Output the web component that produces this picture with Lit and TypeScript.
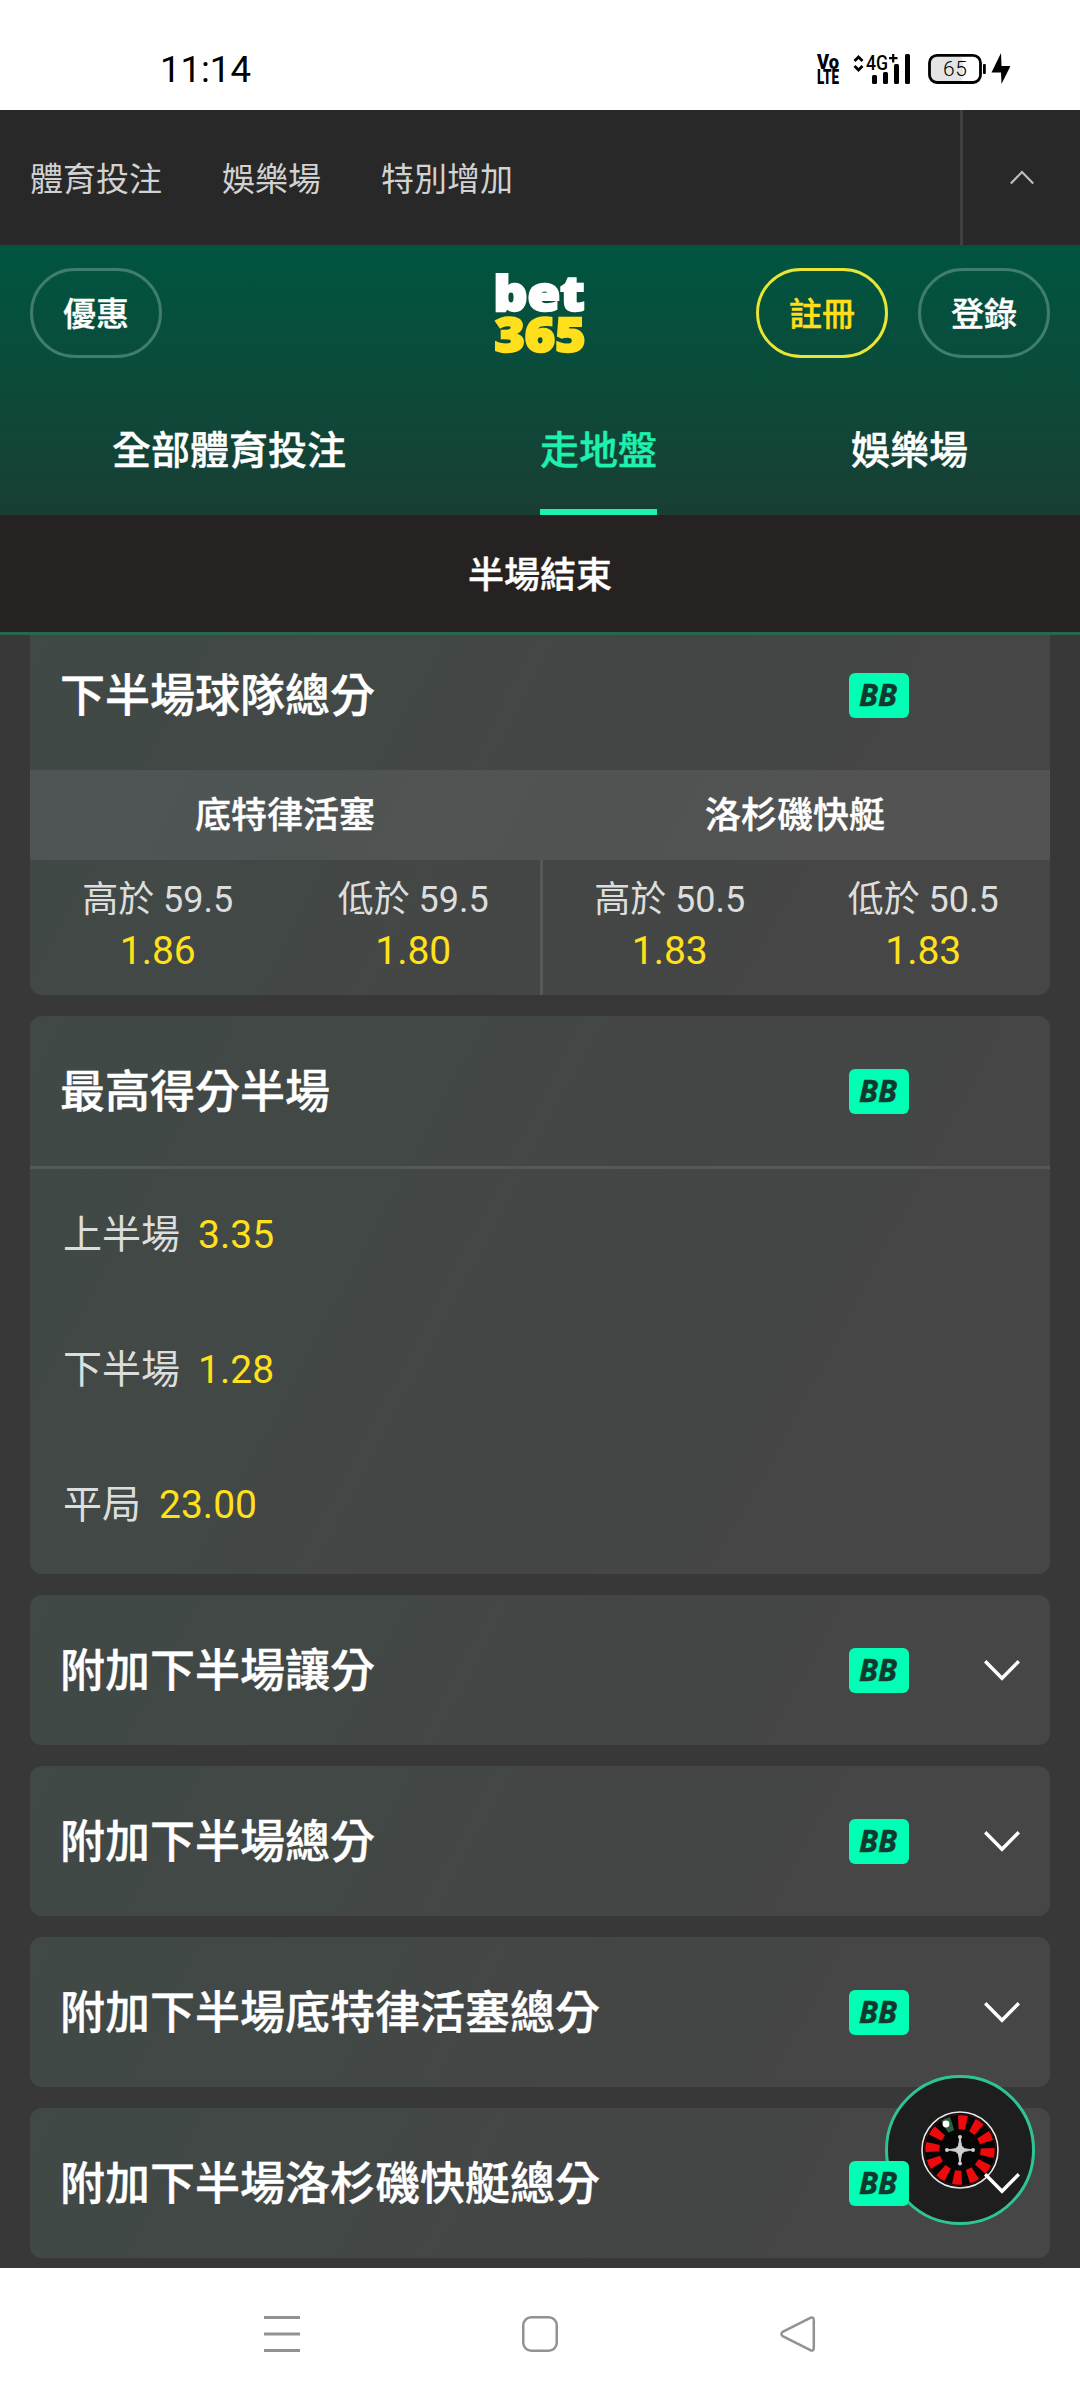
import { LitElement, html, css, svg, nothing } from "lit";
import { customElement, property } from "lit/decorators.js";

const chevronDown = html`<svg width="36" height="21" viewBox="0 0 36 21">
  <path d="M1.2 1.2 18 18.3 34.8 1.2" fill="none" stroke="#fff" stroke-width="3.4" />
</svg>`;

@customElement("status-bar")
class StatusBar extends LitElement {
  static styles = css`
    :host {
      display: flex;
      justify-content: space-between;
      height: 110px;
      box-sizing: border-box;
      padding: 46px 70px 0 160px;
      background: #fff;
      color: #000;
    }
    .clock {
      font-size: 36.5px;
      line-height: 47px;
    }
    .icons {
      margin-top: 4px;
      height: 38px;
    }
  `;
  render() {
    return html`
      <span class="clock">11:14</span>
      <svg class="icons" width="196" height="38" viewBox="814 50 196 38">
        <g font-family="Roboto, sans-serif" font-weight="900">
          <text x="817" y="69.2" font-size="19.5" textLength="22" lengthAdjust="spacingAndGlyphs">Vo</text>
          <text x="817" y="84.2" font-size="19.5" textLength="22" lengthAdjust="spacingAndGlyphs">LTE</text>
        </g>
        <path d="M854.5 61 858.5 57 862.5 61M854.5 66 858.5 70 862.5 66" fill="none" stroke="#000" stroke-width="2.8" />
        <text x="866" y="69.5" font-size="20.5" font-weight="500" textLength="22" lengthAdjust="spacingAndGlyphs" font-family="Roboto, sans-serif">4G</text>
        <path d="M889 58.2H897.5M893.2 54V62.4" stroke="#000" stroke-width="2.2" />
        <rect x="872" y="75" width="5" height="9" rx="1.5" />
        <rect x="883" y="72" width="5" height="12" rx="1.5" />
        <rect x="894" y="64" width="5" height="20" rx="1.5" />
        <rect x="905" y="54" width="5" height="30" rx="1.5" />
        <rect x="930" y="56" width="33" height="26" rx="6" fill="#e4e4e4" />
        <rect x="929.5" y="55.3" width="51" height="27.2" rx="7.5" fill="none" stroke="#000" stroke-width="2.8" />
        <rect x="983" y="64" width="2.8" height="10" rx="1" />
        <text x="943" y="76" font-size="21" font-weight="300" textLength="24" font-family="Roboto, sans-serif">65</text>
        <path d="M1001 53 991.5 72.5H1001L1001.5 84 1010.5 66H1001.5Z" />
      </svg>
    `;
  }
}

@customElement("site-header")
class SiteHeader extends LitElement {
  static styles = css`
    :host {
      display: block;
      color: #fff;
    }
    .products {
      display: flex;
      height: 135px;
      background: #282828;
      color: #d2d2d2;
    }
    .links {
      display: flex;
      flex: 1;
      gap: 60px;
      align-items: center;
      padding: 5px 0 0 30px;
      font-size: 33px;
      line-height: 48px;
    }
    .collapse {
      display: flex;
      width: 117px;
      box-sizing: content-box;
      border-left: 3px solid #404040;
      align-items: center;
      justify-content: center;
    }
    .brand {
      height: 270px;
      display: flex;
      flex-direction: column;
      background: linear-gradient(#005540, #0b4b3a 50%, #193e34);
    }
    .actions {
      display: grid;
      grid-template-columns: 1fr auto 1fr;
      align-items: center;
      height: 136px;
      padding: 0 30px;
    }
    .logo {
      overflow: visible;
    }
    .right {
      display: flex;
      gap: 30px;
      justify-content: flex-end;
    }
    .pill {
      width: 132px;
      height: 90px;
      box-sizing: border-box;
      padding-top: 4px;
      border: 3px solid #407d6c;
      border-radius: 45px;
      display: flex;
      align-items: center;
      justify-content: center;
      font-size: 33px;
      line-height: 48px;
      font-weight: 500;
      -webkit-text-stroke: 0.35px currentColor;
    }
    .join {
      border-color: #e9e534;
      color: #ffdf1b;
    }
    .tabs {
      flex: 1;
      display: flex;
      justify-content: space-around;
      padding: 0 15px;
      font-size: 39px;
      font-weight: 500;
      -webkit-text-stroke: 0.4px currentColor;
    }
    .tab {
      display: flex;
      align-items: center;
      padding-top: 3px;
      border-bottom: 6px solid transparent;
    }
    .active {
      color: #1ef0ae;
      border-color: #1ef0ae;
    }
    .period {
      height: 117px;
      box-sizing: content-box;
      display: flex;
      align-items: center;
      justify-content: center;
      background: #262221;
      border-bottom: 3px solid #25684f;
      font-size: 36px;
      line-height: 52px;
      font-weight: 500;
      -webkit-text-stroke: 0.4px currentColor;
    }
    .period span {
      padding-top: 4px;
    }
  `;
  render() {
    return html`
      <nav class="products">
        <div class="links"><span>體育投注</span><span>娛樂場</span><span>特別增加</span></div>
        <div class="collapse">
          <svg width="24" height="15" viewBox="0 0 24 15">
            <path d="M.8 13.6 12 2 23.2 13.6" fill="none" stroke="#bdbdbd" stroke-width="2.2" />
          </svg>
        </div>
      </nav>
      <div class="brand">
        <div class="actions">
          <span class="pill">優惠</span>
          <svg class="logo" width="92" height="84" viewBox="494 271 92 84" font-family="Open Sans, sans-serif" font-weight="800">
            <text x="493.5" y="310.5" font-size="48.5" fill="#fff" stroke="#fff" stroke-width="2.4" textLength="91" lengthAdjust="spacingAndGlyphs">bet</text>
            <text x="494.5" y="352" font-size="48" fill="#ffdf1b" stroke="#ffdf1b" stroke-width="2.4" textLength="91" lengthAdjust="spacingAndGlyphs">365</text>
          </svg>
          <div class="right"><span class="pill join">註冊</span><span class="pill">登錄</span></div>
        </div>
        <div class="tabs">
          <span class="tab">全部體育投注</span><span class="tab active">走地盤</span><span class="tab">娛樂場</span>
        </div>
      </div>
      <div class="period"><span>半場結束</span></div>
    `;
  }
}

@customElement("market-card")
class MarketCard extends LitElement {
  @property() title = "";
  @property({ type: Boolean }) collapsed = false;
  static styles = css`
    :host {
      display: block;
      border-radius: 12px;
      background: linear-gradient(118deg, #404946, #424846 34%, #444645 52%, #464646);
      overflow: clip;
    }
    :host([raised]) {
      overflow: visible;
    }
    .head {
      display: flex;
      align-items: center;
      height: 150px;
      padding: 0 30px;
      color: #fff;
    }
    .title {
      flex: 1;
      padding-top: 3px;
      font-size: 45px;
      font-weight: 500;
      line-height: 66px;
      -webkit-text-stroke: 0.4px currentColor;
    }
    .badge {
      width: 60px;
      height: 45px;
      border-radius: 6px;
      background: #00ffb4;
      z-index: 2;
    }
    .toggle {
      display: flex;
      width: 36px;
      margin-left: 75px;
      z-index: 2;
    }
  `;
  render() {
    return html`
      <div class="head">
        <span class="title">${this.title}</span>
        <svg class="badge" viewBox="0 0 60 45">
          <text x="10" y="33" font-family="Open Sans, sans-serif" font-weight="700" font-style="italic" font-size="29.5" textLength="38" lengthAdjust="spacingAndGlyphs" fill="#10382e" stroke="#10382e" stroke-width="0.5">BB</text>
        </svg>
        <span class="toggle">${this.collapsed ? chevronDown : nothing}</span>
      </div>
      <slot></slot>
    `;
  }
}

const pockets = Array.from({ length: 12 }, (_, i) => i);

@customElement("casino-button")
class CasinoButton extends LitElement {
  static styles = css`
    :host {
      display: block;
      width: 150px;
      height: 150px;
    }
  `;
  render() {
    return html`<svg width="150" height="150" viewBox="-75 -75 150 150">
      <circle r="73.5" fill="#1e1e1e" stroke="#2fc498" stroke-width="3" />
      <circle r="38" fill="#050505" stroke="#e6e6e6" stroke-width="1.6" />
      <circle r="35.8" fill="none" stroke="#2a1010" stroke-width="1.5" />
      ${pockets.map(
        (i) => svg`<path d="M-3.2 -20.5 -5 -34.2Q0 -35.4 5 -34.2L3.2 -20.5Z"
          fill=${i === 11 ? "#2c5f3c" : "#ec0a0c"} transform="rotate(${5 + i * 30})" />`
      )}
      <circle cx="-14" cy="-26" r="3.4" fill="#fff" />
      <g fill="#cfcfcf">
        <path d="M0 -13 1.6 -3 3 -3 3 -1.4 13 0 3 1.4 3 3 1.6 3 0 13 -1.6 3 -3 3 -3 1.4 -13 0 -3 -1.4 -3 -3 -1.6 -3Z" stroke="#cfcfcf" stroke-width="1.2" />
        <circle cx="0" cy="-13" r="2" /><circle cx="0" cy="13.5" r="2" />
        <circle cx="-13" cy="0" r="2" /><circle cx="13" cy="0" r="2" />
      </g>
    </svg>`;
  }
}

const teams = [
  { name: "底特律活塞", odds: [["高於 59.5", "1.86"], ["低於 59.5", "1.80"]] },
  { name: "洛杉磯快艇", odds: [["高於 50.5", "1.83"], ["低於 50.5", "1.83"]] },
];
const halves = [["上半場", "3.35"], ["下半場", "1.28"], ["平局", "23.00"]];
const collapsedMarkets = [
  "附加下半場讓分",
  "附加下半場總分",
  "附加下半場底特律活塞總分",
  "附加下半場洛杉磯快艇總分",
];

@customElement("app-root")
class AppRoot extends LitElement {
  static styles = css`
    :host {
      display: flex;
      flex-direction: column;
      width: 1080px;
      height: 2400px;
      overflow: hidden;
      font-family: Roboto, "Noto Sans CJK TC", sans-serif;
      background: #383838;
    }
    .scroll {
      position: relative;
      height: 1633px;
      overflow: hidden;
      background: #383838;
    }
    .cards {
      display: flex;
      flex-direction: column;
      gap: 21px;
      margin: -15px 30px 0;
    }
    .teams {
      display: flex;
      height: 90px;
      background: rgba(255, 255, 255, 0.07);
      color: #fff;
      font-size: 36px;
      font-weight: 500;
      line-height: 52px;
      -webkit-text-stroke: 0.4px currentColor;
    }
    .team {
      flex: 1;
      display: flex;
      align-items: center;
      justify-content: center;
      padding-top: 1px;
    }
    .odds {
      display: grid;
      grid-template-columns: 510px 510px;
      height: 135px;
    }
    .pair {
      display: flex;
      padding-top: 14px;
    }
    .pair:first-child {
      margin-right: -1px;
    }
    .pair + .pair {
      border-left: 3px solid #575958;
    }
    .cell {
      flex: 1;
      display: flex;
      flex-direction: column;
      align-items: center;
    }
    .line {
      font-size: 36px;
      line-height: 52px;
      color: #dcdedd;
    }
    .price {
      font-size: 39px;
      line-height: 51px;
      color: #ffe01a;
    }
    .halves {
      border-top: 3px solid #545957;
    }
    .half {
      display: flex;
      align-items: center;
      gap: 18px;
      height: 135px;
      padding-left: 33px;
      font-size: 39px;
      line-height: 57px;
      color: #dcdedd;
    }
    .half .price {
      line-height: 57px;
      padding-bottom: 2px;
    }
    .half .label {
      padding-bottom: 2px;
    }
    .casino {
      position: absolute;
      left: 885px;
      top: 1440px;
      z-index: 1;
    }
    .system {
      flex: 1;
      display: flex;
      background: #fff;
      align-items: center;
      justify-content: center;
      gap: 222px;
    }
  `;
  render() {
    return html`
      <status-bar></status-bar>
      <site-header></site-header>
      <main class="scroll">
        <div class="cards">
          <market-card title="下半場球隊總分">
            <div class="teams">${teams.map((t) => html`<span class="team">${t.name}</span>`)}</div>
            <div class="odds">
              ${teams.map(
                (t) => html`<div class="pair">
                  ${t.odds.map(
                    ([line, price]) => html`<div class="cell">
                      <span class="line">${line}</span><span class="price">${price}</span>
                    </div>`
                  )}
                </div>`
              )}
            </div>
          </market-card>
          <market-card title="最高得分半場">
            <div class="halves">
              ${halves.map(
                ([label, price]) => html`<div class="half">
                  <span class="label">${label}</span><span class="price">${price}</span>
                </div>`
              )}
            </div>
          </market-card>
          ${collapsedMarkets.map(
            (title) => html`<market-card raised collapsed .title=${title}></market-card>`
          )}
        </div>
        <casino-button class="casino"></casino-button>
      </main>
      <nav class="system">
        <svg width="36" height="36" viewBox="0 0 36 36">
          <path d="M0 1.5H36M0 18H36M0 34.5H36" stroke="#929292" stroke-width="3" />
        </svg>
        <svg width="36" height="36" viewBox="0 0 36 36">
          <rect x="1.25" y="1.25" width="33.5" height="33.5" rx="8" fill="none" stroke="#929292" stroke-width="2.5" />
        </svg>
        <svg width="36" height="36" viewBox="0 0 36 36">
          <path d="M2.6 15.8 30.4 1.8Q33.8.6 33.8 4.2V31.8Q33.8 35.4 30.4 34.2L2.6 20.2Q.2 18 2.6 15.8Z" fill="none" stroke="#929292" stroke-width="2.5" stroke-linejoin="round" />
        </svg>
      </nav>
    `;
  }
}
